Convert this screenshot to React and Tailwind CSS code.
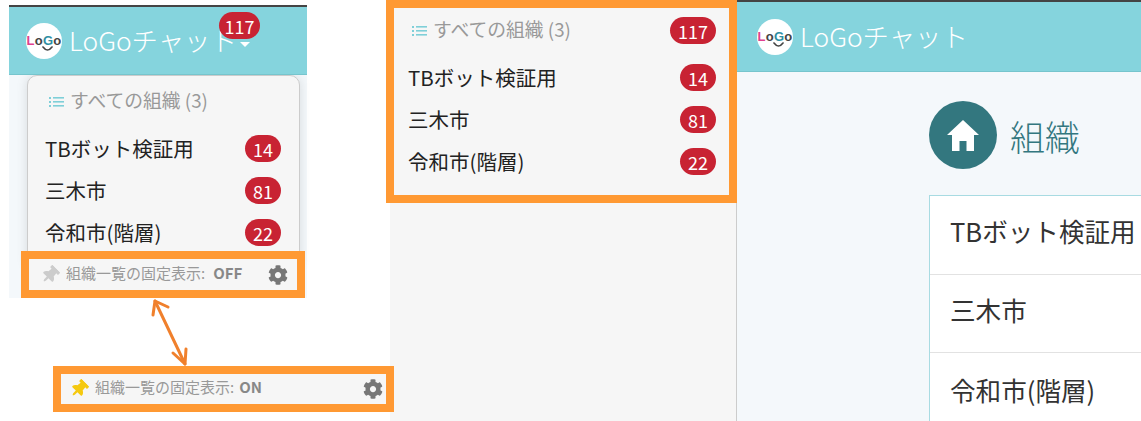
import React from 'react';
import { FaCog, FaThumbtack } from 'react-icons/fa';

const orgs = [
  { name: 'TBボット検証用', count: 14 },
  { name: '三木市', count: 81 },
  { name: '令和市(階層)', count: 22 },
];

const Logo = () => (
  <div className="relative flex h-9 w-9 shrink-0 items-start justify-center rounded-full bg-white pt-[11px] font-['Liberation_Sans',sans-serif] text-[13px] leading-[13px] font-bold tracking-[0.2px] text-[#444]">
    <span className="text-[#e0408f]">L</span>
    <span>o</span>
    <span className="text-[#2f8fa3]">G</span>
    <span>o</span>
    <svg className="absolute top-[23px] left-[16px]" width="11" height="6" viewBox="0 0 11 6">
      <path d="M1 1 Q5.5 7 10 1" fill="none" stroke="#444" strokeWidth="1.6" strokeLinecap="round" />
    </svg>
  </div>
);

const Header = ({ className, children }) => (
  <div className={`flex items-center border-t-2 border-b border-t-[#444] border-b-[#76c5cd] bg-[#85d4dd] text-white ${className}`}>
    <Logo />
    {children}
  </div>
);

const Badge = ({ children, className = '' }) => (
  <span className={`flex h-[27px] items-center justify-center rounded-full bg-[#c82333] text-[18px] leading-none text-white ${className}`}>
    {children}
  </span>
);

const OrgList = ({ title, badge }) => (
  <>
    <div className="flex h-[27px] items-center justify-between">
      <div className="flex items-center pb-[4px] text-[18.8px] leading-[26px] text-[#999]">
        <svg className="mr-[6px] mt-[3px]" width="15" height="11" viewBox="0 0 15 11" fill="#7fcfd8">
          <rect x="0" y="1" width="2" height="2" />
          <rect x="0" y="5" width="2" height="2" />
          <rect x="0" y="9" width="2" height="2" />
          <rect x="4" y="1" width="11" height="1.6" />
          <rect x="4" y="5" width="11" height="1.6" />
          <rect x="4" y="9" width="11" height="1.6" />
        </svg>
        {title}
      </div>
      {badge}
    </div>
    <ul className="mt-[20px] -ml-[4px] flex flex-col gap-[15px]">
      {orgs.map((org) => (
        <li key={org.name} className="flex h-[27px] items-center justify-between text-[20.5px] text-[#222]">
          {org.name}
          <Badge className="w-[36px]">{org.count}</Badge>
        </li>
      ))}
    </ul>
  </>
);

const PinRow = ({ pinClass, label, value, valueClass, className }) => (
  <div className={`absolute flex items-center justify-between border-8 border-[#ff9933] bg-[#f6f6f6] text-[15px] text-[#999] ${className}`}>
    <div className="flex items-center">
      <FaThumbtack className={`mr-[7px] rotate-45 text-[18px] ${pinClass}`} />
      <span className="pb-[3px]">{label}:</span>
      <span className={`pb-[3px] font-bold text-[#888] ${valueClass}`}>{value}</span>
    </div>
    <FaCog className="text-[20px] text-[#777]" />
  </div>
);

export default function App() {
  return (
    <div className="relative h-[421px] w-[1141px] overflow-hidden bg-white font-['Noto_Sans_CJK_JP',sans-serif]">
      {/* left capture */}
      <div className="absolute top-[5px] left-[9px] flex h-[293px] w-[298px] flex-col bg-[#f4f8fb]">
        <Header className="relative h-[70px] shrink-0 pl-[17px]">
          <span className="ml-[7px] text-[26.4px] leading-none font-light">LoGoチャット</span>
          <span className="absolute top-[35px] left-[231px] h-0 w-0 border-x-[5px] border-t-[5px] border-x-transparent border-t-white" />
          <Badge className="absolute top-[5px] left-[210px] w-[41px]">117</Badge>
        </Header>
        <div className="mx-[18px] h-[190px] w-[273px] rounded-t-[10px] border border-[#ccc] bg-[#f6f6f6] pt-[12px] pr-[18px] pl-[21px] shadow-[0_0_12px_rgba(0,0,0,0.12)]">
          <OrgList title="すべての組織 (3)" />
        </div>
      </div>
      <PinRow
        className="top-[251px] left-[21px] h-[47px] w-[284px] pr-[9px] pl-[12px]"
        pinClass="text-[#ccc]"
        valueClass="ml-[8px]"
        label="組織一覧の固定表示"
        value="OFF"
      />

      {/* double arrow between the two captures */}
      <svg className="absolute top-[298px] left-[150px]" width="42" height="70" viewBox="0 0 42 70" fill="none" stroke="#f0802c" strokeWidth="3" strokeLinecap="round" strokeLinejoin="round">
        <path d="M5 3 L35 66" />
        <path d="M3 17 L5 3 L18 9" />
        <path d="M23 55 L35 66 L36 51" />
      </svg>

      {/* middle capture */}
      <div className="absolute top-0 left-[390px] h-[421px] w-[347px] border-r border-r-[#ccc] bg-[#f6f6f6]" />
      <div className="absolute top-0 left-[386px] h-[203px] w-[351px] border-8 border-[#ff9933] bg-[#f6f6f6] pt-[9px] pr-[13px] pl-[18px]">
        <OrgList title="すべての組織 (3)" badge={<Badge className="w-[46px]">117</Badge>} />
      </div>

      {/* right capture */}
      <div className="absolute top-0 left-[737px] flex h-[421px] w-[404px] flex-col bg-[#f4f8fb]">
        <Header className="h-[72px] shrink-0 pl-[20px]">
          <span className="ml-[7px] text-[26.4px] leading-none font-light">LoGoチャット</span>
        </Header>
        <div className="pl-[192px]">
          <div className="mt-[29px] flex items-center">
            <div className="flex h-[68px] w-[68px] items-center justify-center rounded-full bg-[#33777f]">
              <svg width="32" height="31" viewBox="0 0 32 31" fill="#fff">
                <path d="M16 0 L32 15 L27 15 L27 31 L19.5 31 L19.5 21 L12.5 21 L12.5 31 L5 31 L5 15 L0 15 Z" />
              </svg>
            </div>
            <h1 className="ml-[13px] text-[35px] leading-none font-light text-[#33777f]">組織</h1>
          </div>
          <div className="mt-[26px] border-t border-l border-[#a8dbe2] bg-white text-[25.6px] text-[#333]">
            <div className="h-[79px] border-b border-[#e2e2e2] pt-[16px] pl-[20px] whitespace-nowrap">TBボット検証用</div>
            <div className="h-[78px] border-b border-[#e2e2e2] pt-[16px] pl-[20px]">三木市</div>
            <div className="h-[80px] pt-[18px] pl-[20px]">令和市(階層)</div>
          </div>
        </div>
      </div>

      <PinRow
        className="top-[366px] left-[53px] h-[46px] w-[341px] pr-[3px] pl-[9px]"
        pinClass="text-[#f5c910]"
        valueClass="ml-[5px]"
        label="組織一覧の固定表示"
        value="ON"
      />
    </div>
  );
}
